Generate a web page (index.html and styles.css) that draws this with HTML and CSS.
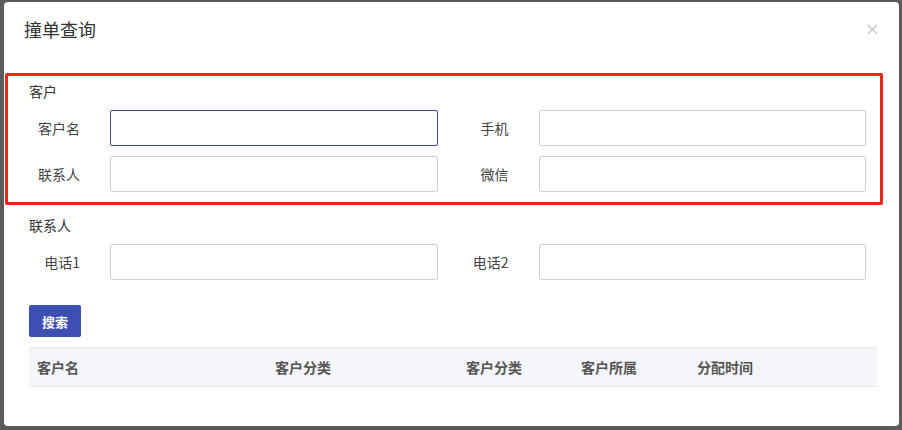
FILE: index.html
```html
<!DOCTYPE html>
<html lang="zh-CN">
<head>
<meta charset="utf-8">
<title>撞单查询</title>
<link rel="stylesheet" href="styles.css">
</head>
<body>
<div class="backdrop">
  <div class="modal">
    <div class="modal-header">
      <h2 class="modal-title">撞单查询</h2>
      <button class="close-btn" type="button" aria-label="关闭">
        <svg width="11" height="11" viewBox="0 0 11 11"><path d="M1 1 L10 10 M10 1 L1 10" stroke="#c4c4c4" stroke-width="1.4" fill="none"/></svg>
      </button>
    </div>

    <div class="group group-marked">
      <div class="group-label">客户</div>
      <div class="fields">
        <div class="field"><label class="field-label">客户名</label><input class="field-input is-focused" type="text"></div>
        <div class="field"><label class="field-label">手机</label><input class="field-input" type="text"></div>
        <div class="field"><label class="field-label">联系人</label><input class="field-input" type="text"></div>
        <div class="field"><label class="field-label">微信</label><input class="field-input" type="text"></div>
      </div>
    </div>

    <div class="group">
      <div class="group-label">联系人</div>
      <div class="fields">
        <div class="field"><label class="field-label">电话1</label><input class="field-input" type="text"></div>
        <div class="field"><label class="field-label">电话2</label><input class="field-input" type="text"></div>
      </div>
      <button class="search-btn" type="button">搜索</button>
    </div>

    <div class="result-table">
      <div class="th col-name">客户名</div>
      <div class="th col-type">客户分类</div>
      <div class="th col-type2">客户分类</div>
      <div class="th col-owner">客户所属</div>
      <div class="th col-time">分配时间</div>
    </div>
  </div>
</div>
</body>
</html>
```

FILE: styles.css
```css
* { box-sizing: border-box; }

html, body {
  margin: 0;
  padding: 0;
  width: 902px;
  height: 430px;
  overflow: hidden;
  font-family: "Noto Sans CJK SC", "Liberation Sans", sans-serif;
  color: #333;
}

.backdrop {
  width: 902px;
  height: 430px;
  background: #5c5c5c;
  padding: 2px 3px 4px 4px;
  display: flex;
}

.modal {
  flex: 1;
  background: #fff;
  border-radius: 4px;
}

.modal-header {
  display: flex;
  align-items: center;
  justify-content: space-between;
  padding: 15px 21px 32px 20px;
}

.modal-title {
  margin: 0;
  font-size: 18px;
  line-height: 24px;
  font-weight: normal;
  color: #333;
}

.close-btn {
  border: 0;
  background: none;
  padding: 0;
  width: 11px;
  height: 11px;
  display: flex;
}

.group {
  padding: 10px 33px 0 25px;
}

.group-marked {
  margin: 0 16px 0 1px;
  border: 3px solid #e8271d;
  border-radius: 2px;
  padding: 5px 14px 10px 21px;
}

.group-label {
  font-size: 14px;
  line-height: 20px;
  color: #333;
}

.fields {
  margin-top: 9px;
  display: grid;
  grid-template-columns: 1fr 1fr;
  column-gap: 20px;
  row-gap: 10px;
}

.field {
  display: grid;
  grid-template-columns: 51px 1fr;
  column-gap: 30px;
  align-items: center;
}

.field-label {
  text-align: right;
  font-size: 14px;
  line-height: 20px;
  color: #444;
  white-space: nowrap;
}

.field-input {
  height: 36px;
  border: 1px solid #cfcfcf;
  border-radius: 2px;
  background: #fff;
  outline: none;
  font: inherit;
}

.field-input.is-focused {
  border-color: #3f4c96;
}

.search-btn {
  margin-top: 25px;
  width: 52px;
  height: 32px;
  border: 0;
  border-radius: 2px;
  background: #3e4fb4;
  color: #fff;
  font-family: inherit;
  font-size: 13px;
  font-weight: bold;
  padding: 0;
}

.result-table {
  margin: 10px 22px 0 25px;
  height: 40px;
  display: grid;
  grid-template-columns: 238px 191px 115px 116px 1fr;
  align-items: center;
  background: #f5f6fa;
  border-top: 1px solid #e6e8ee;
  border-bottom: 1px solid #e6e8ee;
}

.th {
  padding-left: 8px;
  font-size: 14px;
  line-height: 20px;
  font-weight: bold;
  color: #555;
}
```
